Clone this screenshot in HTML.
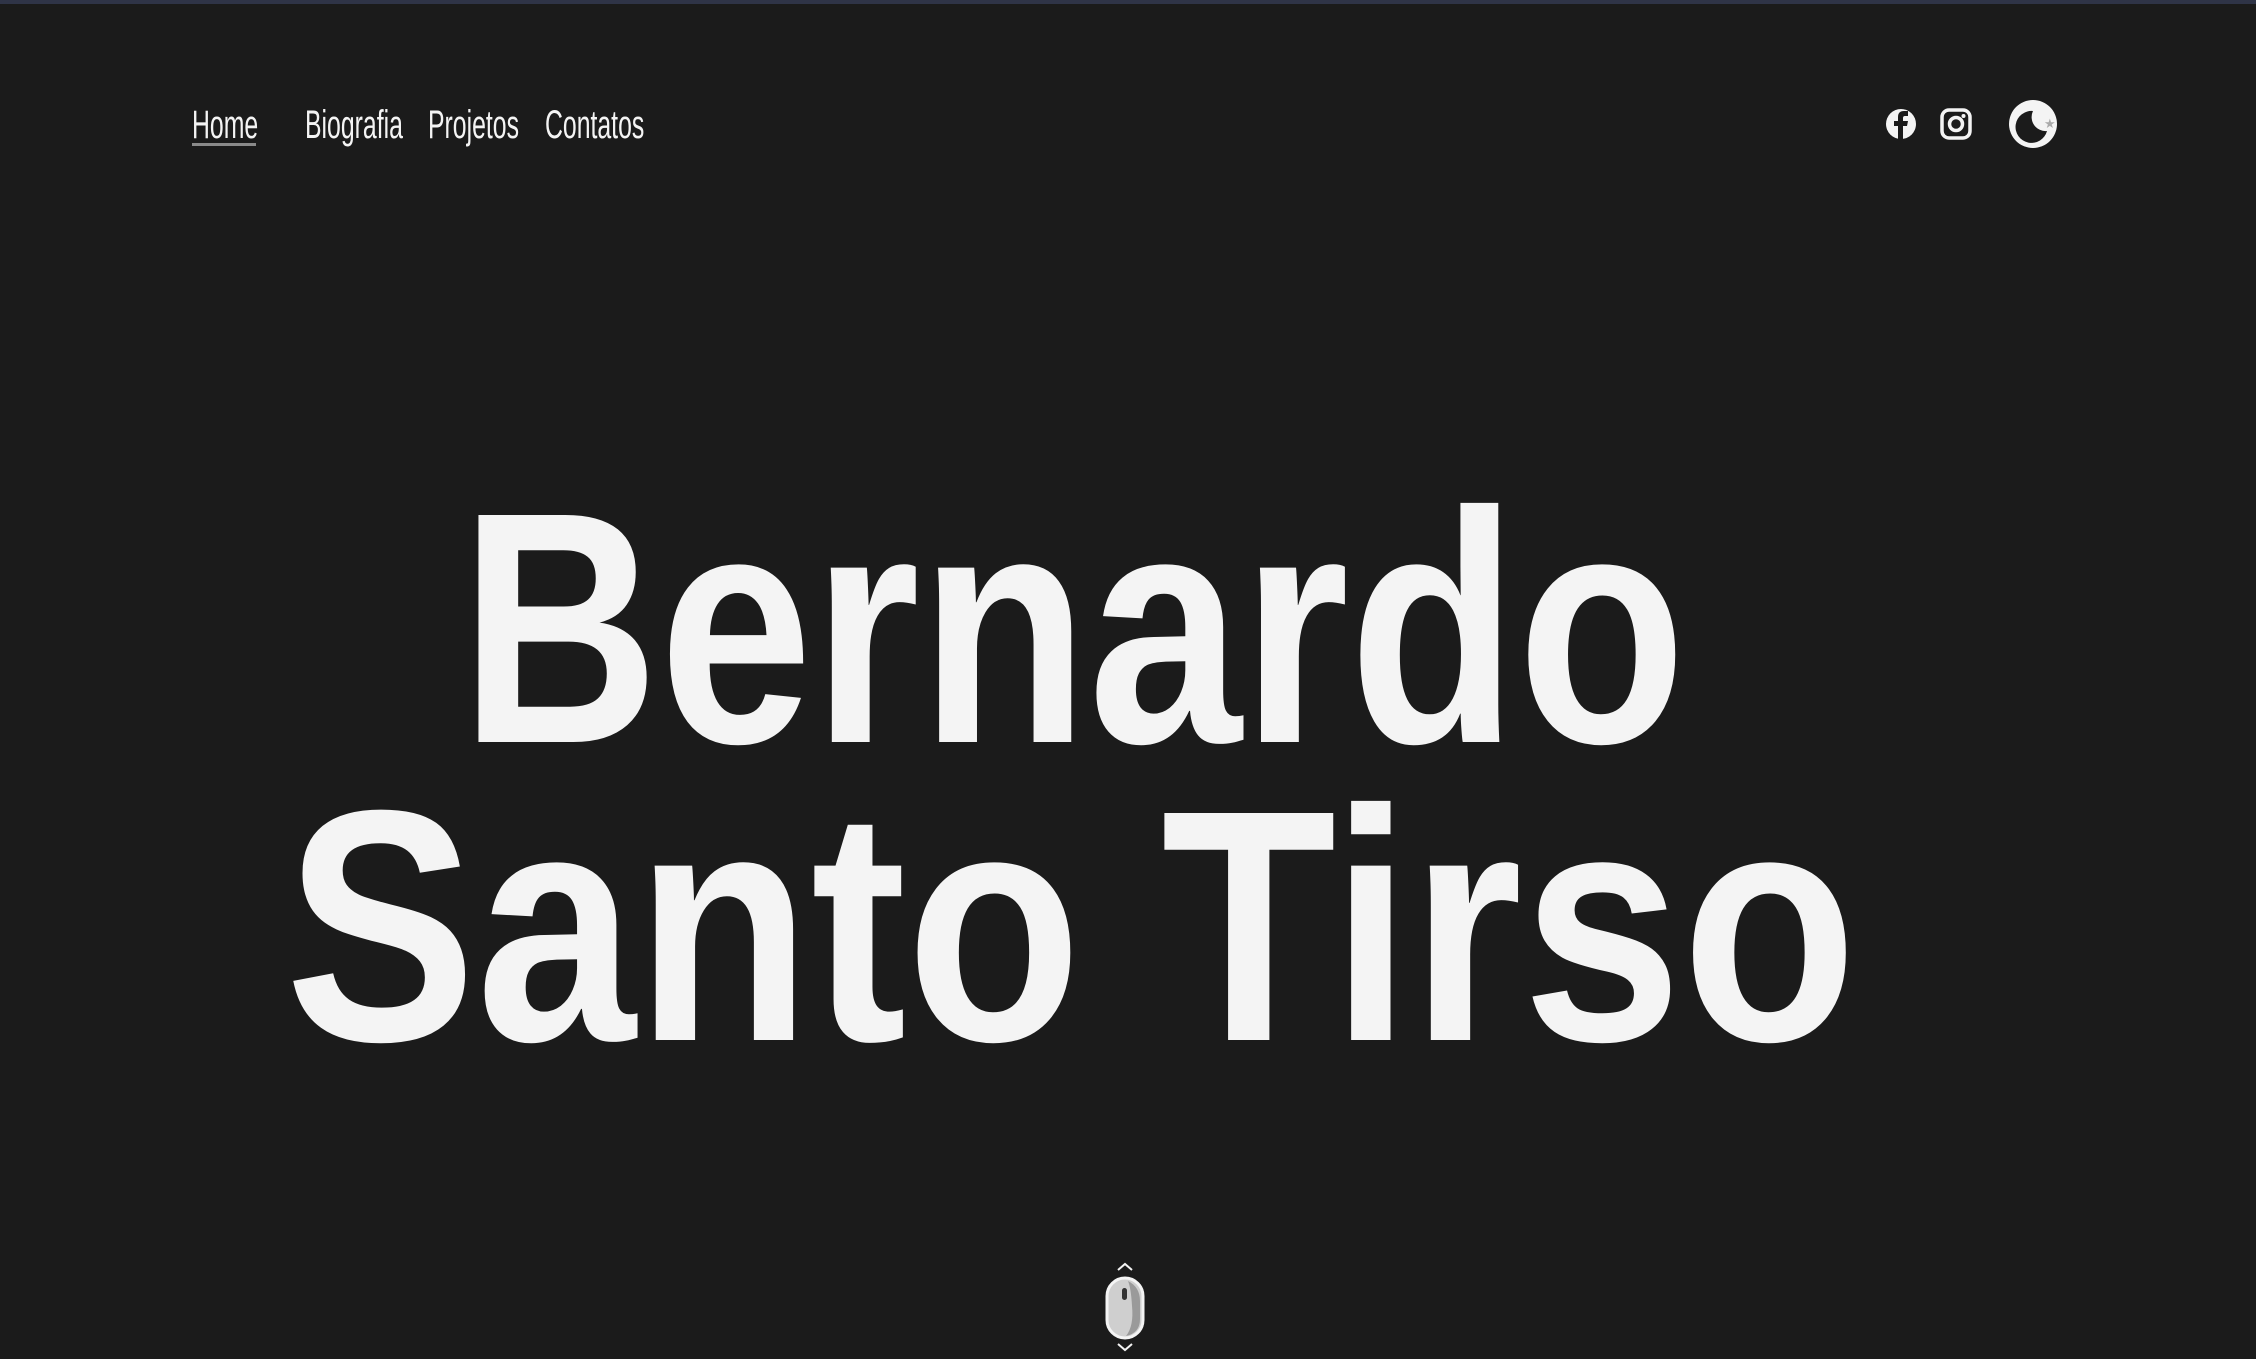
<!DOCTYPE html>
<html><head><meta charset="utf-8"><style>
html,body{margin:0;padding:0;background:#1b1b1b;width:2256px;height:1359px;overflow:hidden;position:relative}
.top{position:absolute;left:0;top:0;width:2256px;height:4px;background:#2f3447}
.nav{position:absolute;top:103px;left:192px;font-family:"Liberation Sans Narrow","Liberation Sans",sans-serif;font-size:40px;color:#f4f4f4;white-space:nowrap}
.nav span{position:absolute;top:0;display:inline-block;transform-origin:left top}
.ul{position:absolute;left:192px;top:143px;width:64px;height:3px;background:#8a8a8a}
svg{position:absolute;left:0;top:0}
</style></head><body>
<div class="top"></div>
<div class="nav">
<span style="left:0;transform:scaleX(0.62)">Home</span>
<span style="left:113px;transform:scaleX(0.62)">Biografia</span>
<span style="left:236px;transform:scaleX(0.62)">Projetos</span>
<span style="left:353px;transform:scaleX(0.62)">Contatos</span>
</div>
<div class="ul"></div>
<svg width="2256" height="1359" viewBox="0 0 2256 1359">
<circle cx="1901" cy="124" r="15" fill="#f4f4f4"/>
<path d="M1898 140 V126 h-4 v-5 h4 v-4 q0-6 6-6 h4 v5 h-3 q-2 0-2 2 v3 h5 l-1 5 h-4 V140z" fill="#1b1b1b"/>
<rect x="1942" y="110" width="28" height="28" rx="7" fill="none" stroke="#f4f4f4" stroke-width="3.5"/>
<circle cx="1956" cy="124" r="6.5" fill="none" stroke="#f4f4f4" stroke-width="3.5"/>
<circle cx="1963.5" cy="116" r="2" fill="#f4f4f4"/>
<circle cx="2033" cy="124" r="24" fill="#f4f4f4"/>
<path d="M2033 111 a16 16 0 1 0 14 20 a14 14 0 0 1 -14 -20z" fill="#1b1b1b"/>
<text x="2044" y="128" font-size="13" fill="#aaa" font-family="DejaVu Sans">★</text>
<text x="460" y="742" font-family="Liberation Sans" font-weight="bold" font-size="330" fill="#f4f4f4" textLength="1226" lengthAdjust="spacingAndGlyphs">Bernardo</text>
<text x="285" y="1040" font-family="Liberation Sans" font-weight="bold" font-size="330" fill="#f4f4f4" textLength="1572" lengthAdjust="spacingAndGlyphs">Santo Tirso</text>
<path d="M1118 1270 l7 -6 l7 6" fill="none" stroke="#f4f4f4" stroke-width="2"/>
<path d="M1118 1344 l7 6 l7 -6" fill="none" stroke="#f4f4f4" stroke-width="2"/>
<rect x="1107" y="1278" width="36" height="60" rx="18" fill="#cfcfcf" stroke="#f4f4f4" stroke-width="3"/>
<path d="M1128 1281 q12 6 12 20 v18 q0 14 -14 17 q8 -10 6 -30 q-1 -18 -4 -25z" fill="#9a9a9a"/>
<rect x="1122" y="1288" width="5" height="12" rx="2.5" fill="#333"/>
</svg>
</body></html>
